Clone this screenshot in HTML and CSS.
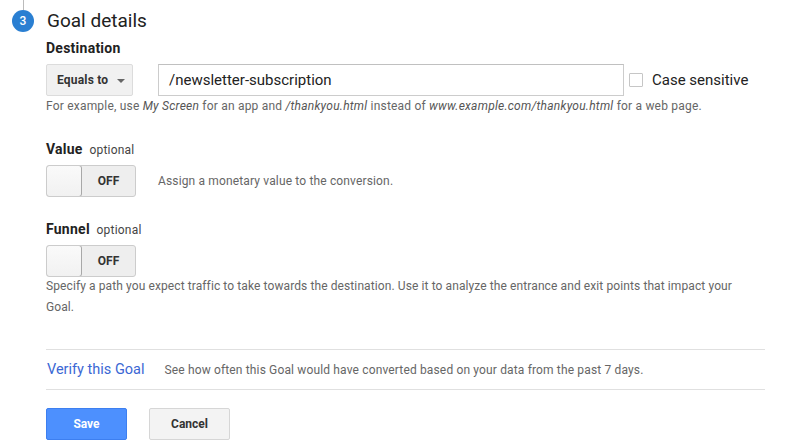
FILE: index.html
```html
<!DOCTYPE html>
<html>
<head>
<meta charset="utf-8">
<link rel="stylesheet" href="styles.css">
</head>
<body>
<div class="page">
  <div class="rail"></div>
  <div class="step">
    <div class="step-num">3</div>
    <h1 class="title">Goal details</h1>
  </div>
  <div class="content">
    <div class="label label-dest">Destination</div>
    <div class="dest-row">
      <div class="select">Equals to <span class="caret"></span></div>
      <div class="input">/newsletter-subscription</div>
      <label class="check"><span class="box"></span>Case sensitive</label>
    </div>
    <div class="help">For example, use <i>My Screen</i> for an app and <i>/thankyou.html</i> instead of <i>www.example.com/thankyou.html</i> for a web page.</div>

    <div class="label label-value">Value <span class="opt">optional</span></div>
    <div class="toggle-row">
      <div class="toggle"><span class="knob"></span><span class="state">OFF</span></div>
      <div class="toggle-desc">Assign a monetary value to the conversion.</div>
    </div>

    <div class="label label-funnel">Funnel <span class="opt">optional</span></div>
    <div class="toggle"><span class="knob"></span><span class="state">OFF</span></div>
    <div class="funnel-desc">Specify a path you expect traffic to take towards the destination. Use it to analyze the entrance and exit points that impact your Goal.</div>

    <div class="verify">
      <span class="verify-link">Verify this Goal</span>
      <span class="verify-text">See how often this Goal would have converted based on your data from the past 7 days.</span>
    </div>

    <div class="buttons">
      <button class="btn btn-save">Save</button>
      <button class="btn btn-cancel">Cancel</button>
    </div>
  </div>
</div>
</body>
</html>
```
FILE: styles.css
```css
* { box-sizing: border-box; }
html, body { margin: 0; padding: 0; background: #fff; }
body { font-family: Roboto, "Liberation Sans", Arial, sans-serif; color: #222; }
.page { position: relative; width: 798px; height: 446px; overflow: hidden; }
.rail { position: absolute; left: 23px; top: 0; width: 1px; height: 10px; background: #bbb; }
.step { display: flex; align-items: center; height: 24px; margin-top: 9px; padding-left: 12px; }
.step-num {
  width: 22px; height: 22px; border-radius: 50%;
  background: #2a7fd2; color: #fff; font-size: 12px; font-weight: 500;
  display: flex; align-items: center; justify-content: center;
}
.title { margin: 0 0 0 13px; font-size: 19px; font-weight: 400; line-height: 24px; color: #212121; }
.content { padding-left: 46px; width: 766px; }
.label { font-size: 14px; font-weight: 700; line-height: 18px; color: #222; letter-spacing: 0.25px; }
.label-dest { margin-top: 6px; }
.opt { font-size: 12px; font-weight: 400; color: #444; margin-left: 3px; letter-spacing: 0.2px; }
.dest-row { display: flex; align-items: center; margin-top: 7px; height: 32px; }
.select {
  width: 87px; height: 32px; background: #f1f1f1; border: 1px solid #dcdcdc; border-radius: 2px;
  font-size: 12px; font-weight: 700; color: #333; display: flex; align-items: center; padding-left: 10px;
  letter-spacing: 0.2px;
}
.caret { display: inline-block; width: 0; height: 0; border-left: 4px solid transparent; border-right: 4px solid transparent; border-top: 4px solid #666; margin-left: 9px; margin-top: 1px; }
.input {
  margin-left: 25px; width: 466px; height: 32px; border: 1px solid #ccc; border-top-color: #c0c0c0;
  font-size: 15px; color: #222; display: flex; align-items: center; padding-left: 10px;
}
.check { display: flex; align-items: center; margin-left: 5px; font-size: 15px; color: #222; }
.box { width: 14px; height: 14px; border: 1px solid #c6c6c6; border-radius: 1px; margin-right: 9px; margin-top: -1px; }
.help { font-size: 12px; line-height: 16px; color: #666; margin-top: 2px; letter-spacing: 0.2px; }
.help i { color: #555; letter-spacing: 0.25px; }
.label-value { margin-top: 26px; }
.toggle-row { display: flex; align-items: center; margin-top: 6px; }
.toggle {
  width: 90px; height: 32px; border: 1px solid #ccc; border-radius: 3px; background: #eee;
  display: flex; align-items: center; position: relative; overflow: hidden;
}
.toggle .knob { width: 36px; height: 32px; margin: -1px 0 0 -1px; background: linear-gradient(#fafafa, #f1f1f1); border: 1px solid #a8a8a8; border-radius: 3px; flex: none; }
.toggle .state { flex: 1; text-align: center; font-size: 12px; font-weight: 700; color: #333; }
.toggle-desc { margin-left: 22px; font-size: 12px; color: #666; letter-spacing: 0.15px; }
.label-funnel { margin-top: 23px; }
.label-funnel + .toggle { margin-top: 6px; }
.funnel-desc { font-size: 12px; line-height: 21px; color: #666; margin-top: -1px; width: 710px; letter-spacing: 0.1px; }
.verify {
  margin-top: 31px; width: 719px; height: 41px; border-top: 1px solid #e0e0e0; border-bottom: 1px solid #e0e0e0;
  display: flex; align-items: center;
}
.verify-link { font-size: 14.5px; color: #3b67d4; margin-left: 1px; }
.verify-text { margin-left: 20px; font-size: 12px; color: #666; letter-spacing: 0.15px; }
.buttons { display: flex; margin-top: 18px; }
.btn {
  width: 81px; height: 32px; border-radius: 2px; font-family: Roboto, "Liberation Sans", Arial, sans-serif;
  font-size: 12px; font-weight: 700; padding: 0;
}
.btn-save { background: #4d90fe; border: 1px solid #3d7ff0; color: #fff; }
.btn-cancel { margin-left: 22px; background: #f3f3f3; border: 1px solid #d6d6d6; color: #333; }
```
